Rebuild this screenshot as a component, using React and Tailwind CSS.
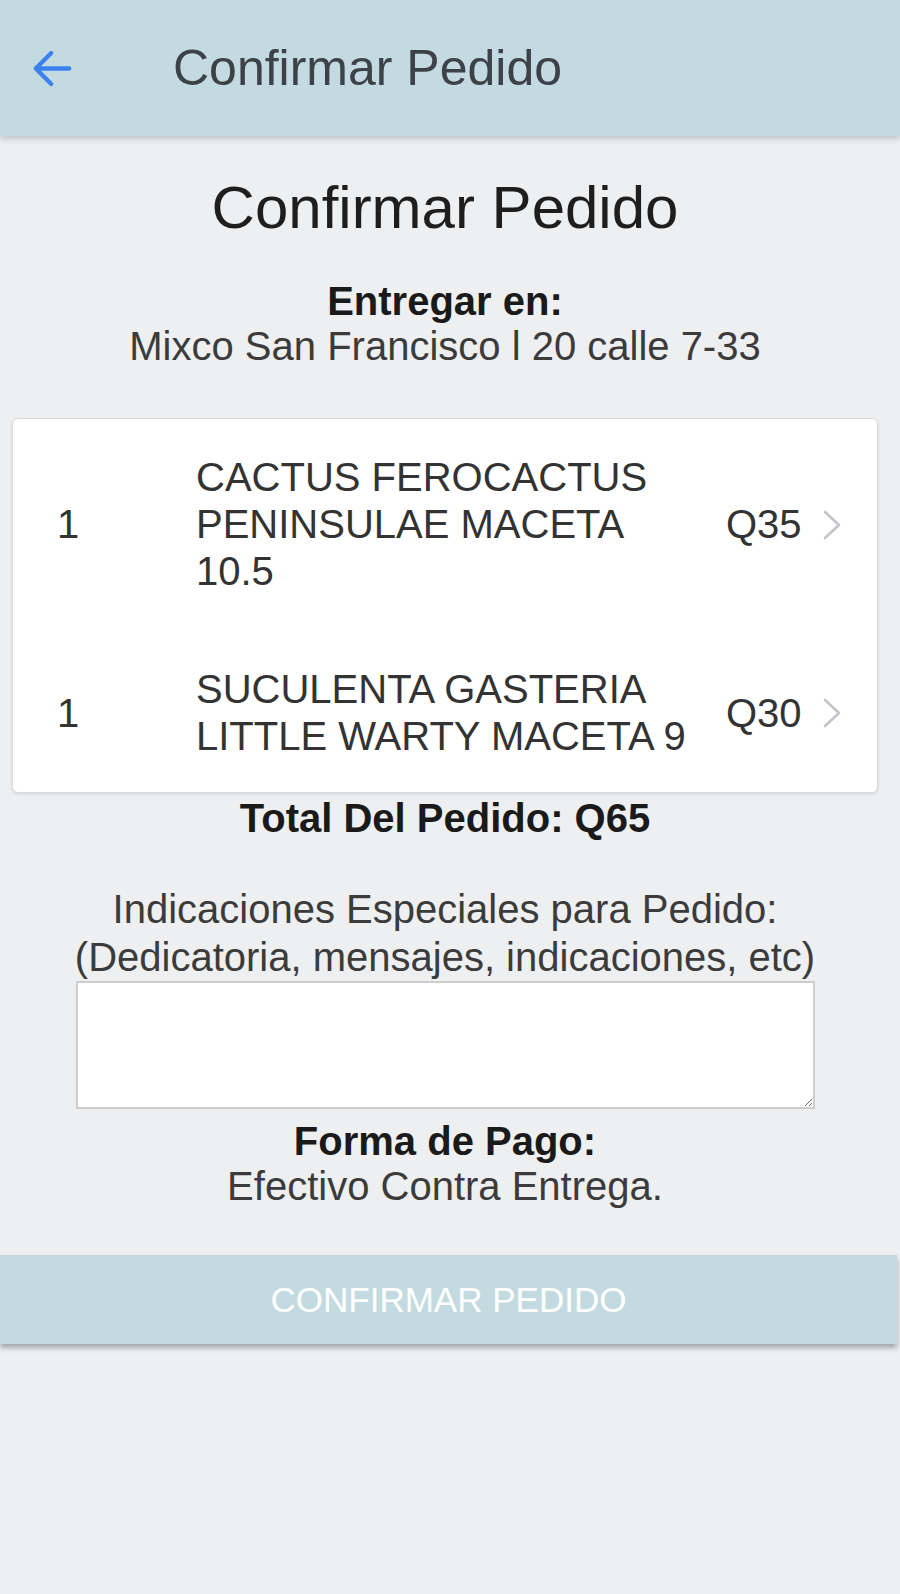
import React from "react";

function BackArrow() {
  return (
    <svg width="55" height="55" viewBox="0 0 512 512" fill="none">
      <path
        d="M244 400L100 256l144-144M120 256h292"
        stroke="#3b82ee"
        strokeWidth="40"
        strokeLinecap="round"
        strokeLinejoin="round"
      />
    </svg>
  );
}

function Chevron() {
  return (
    <svg width="18" height="30" viewBox="0 0 18 30" fill="none">
      <polyline
        points="2,2 16,15 2,28"
        stroke="#c4c4c9"
        strokeWidth="2.6"
        strokeLinecap="round"
        strokeLinejoin="round"
      />
    </svg>
  );
}

function Item({ qty, name, price }) {
  return (
    <div className="flex items-center text-left">
      <div className="w-[183px] pl-[44px] shrink-0">{qty}</div>
      <div className="w-[510px] shrink-0">{name}</div>
      <div className="ml-[20px] w-[78px] shrink-0">{price}</div>
      <div className="ml-[19px] flex items-center">
        <Chevron />
      </div>
    </div>
  );
}

export default function App() {
  return (
    <div className="min-h-[1594px] w-[900px] bg-[#eeeff1] font-['Liberation_Sans',Arial,sans-serif]">
      <header className="relative z-10 flex h-[136px] items-center bg-[#c3dbe0] shadow-[0_3px_6px_rgba(0,0,0,0.18)]">
        <div className="pl-[25px] flex items-center">
          <BackArrow />
        </div>
        <div className="ml-[93px] text-[50px] leading-none text-[#3d4248]">
          Confirmar Pedido
        </div>
      </header>

      <main className="w-[890px] text-center">
        <h1 className="mt-[37px] text-[60px] leading-[70px] text-[#1e1e1e]">
          Confirmar Pedido
        </h1>

        <div className="mt-[36px] text-[40px] leading-[45px]">
          <div className="font-bold text-[#1a1a1a]">Entregar en:</div>
          <div className="text-[#3b3b3b]">Mixco San Francisco l 20 calle 7-33</div>
        </div>

        <div className="mx-[12px] mt-[49px] flex flex-col gap-[71px] rounded-[6px] border border-[#dcdcdc] bg-white pt-[35px] pb-[32px] text-[40px] leading-[47px] text-[#333] shadow-[0_1px_3px_rgba(0,0,0,0.12)]">
          <Item qty="1" name="CACTUS FEROCACTUS PENINSULAE MACETA 10.5" price="Q35" />
          <Item qty="1" name="SUCULENTA GASTERIA LITTLE WARTY MACETA 9" price="Q30" />
        </div>

        <div className="mt-[2px] text-[40px] font-bold leading-[46px] text-[#1a1a1a]">
          Total Del Pedido: Q65
        </div>

        <div className="mt-[44px] text-[40px] leading-[48px] text-[#3b3b3b]">
          <div>Indicaciones Especiales para Pedido:</div>
          <div>(Dedicatoria, mensajes, indicaciones, etc)</div>
        </div>

        <div className="flex justify-center">
          <textarea className="block h-[128px] w-[739px] border-2 border-[#cdcdcd] bg-white" />
        </div>

        <div className="mt-[10px] text-[40px] leading-[45px]">
          <div className="font-bold text-[#1a1a1a]">Forma de Pago:</div>
          <div className="text-[#3b3b3b]">Efectivo Contra Entrega.</div>
        </div>
      </main>

      <button className="mt-[46px] flex h-[89px] w-[897px] items-center justify-center bg-[#c3dbe0] text-[35px] leading-none text-white shadow-[0_4px_5px_rgba(0,0,0,0.3)]">
        CONFIRMAR PEDIDO
      </button>
    </div>
  );
}
